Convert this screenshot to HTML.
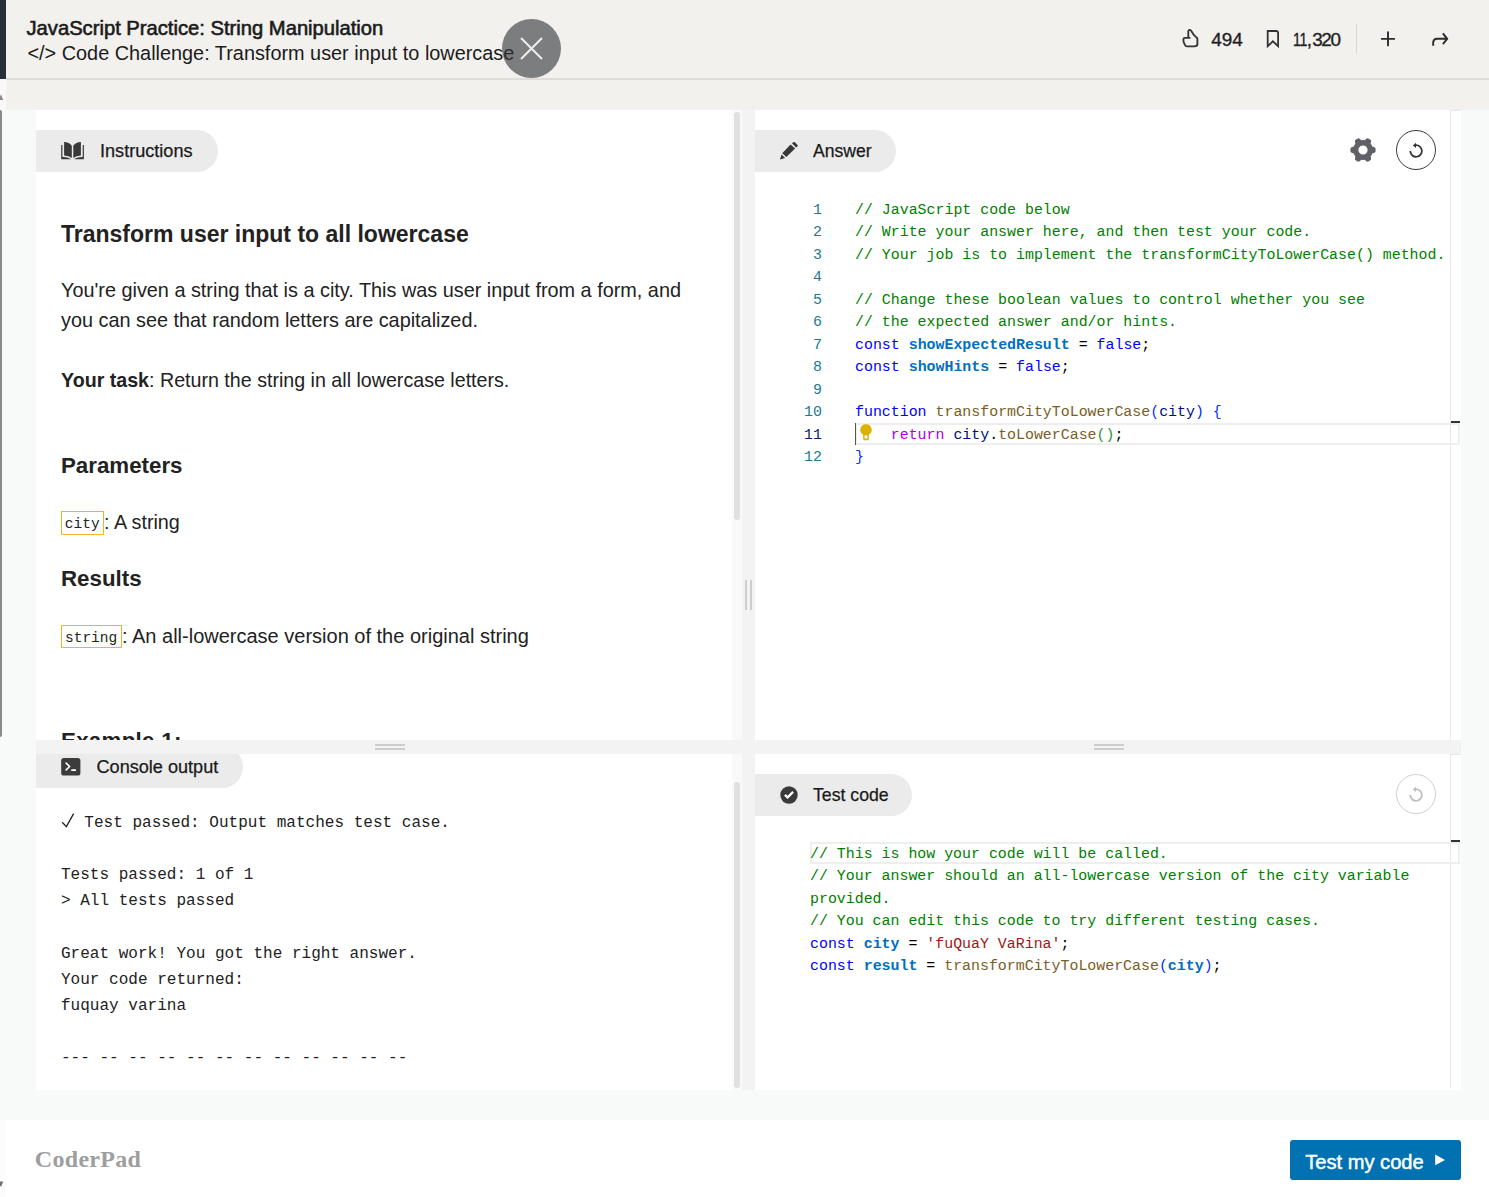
<!DOCTYPE html>
<html><head><meta charset="utf-8">
<style>
*{box-sizing:border-box;margin:0;padding:0}
html,body{width:1489px;height:1197px;overflow:hidden}
body{position:relative;background:#f8f9f9;font-family:"Liberation Sans",sans-serif;color:#1f1f1f}
.a{position:absolute}
.t{position:absolute;white-space:pre;line-height:1}
.mono{font-family:"Liberation Mono",monospace}
.pill{position:absolute;background:#ebebeb;height:42px;border-radius:0 21px 21px 0}
.sb{position:absolute;background:#dfe0e0;border-radius:3px;width:6px}
.hl{position:absolute;background:#cdcdcd;height:2px}
.vl{position:absolute;background:#cdcdcd;width:2px}
.cm{color:#008000}.kw{color:#0000ff}.cn{color:#0070c1;font-weight:bold}.fn{color:#795e26}.pa{color:#001080}.rt{color:#af00db}.b1{color:#0431fa}.b2{color:#319331}.st{color:#a31515}
.ln{position:absolute;color:#237893;text-align:right;width:30px}
</style></head><body>
<!-- left strip -->
<div class="a" style="left:0;top:0;width:6px;height:79px;background:#272e37"></div>
<div class="a" style="left:0;top:79px;width:6px;height:1118px;background:#f9f9f9"></div>
<div class="a" style="left:0;top:110px;width:2px;height:627px;background:#8a8a8a;border-radius:0 2px 2px 0"></div>
<svg class="a" style="left:0;top:93px" width="6" height="8" viewBox="0 0 6 8"><path d="M-2 7L1 1.5L3.2 7Z" fill="#8a8a8a"/></svg>
<!-- header -->
<div class="a" style="left:6px;top:0;width:1483px;height:110px;background:#f2f1ee"></div>
<div class="a" style="left:6px;top:78px;width:1483px;height:2px;background:#dddcd8"></div>
<div class="t" id="h1" style="left:26.5px;top:18.2px;font-size:20.2px;-webkit-text-stroke:0.6px #1b1b1b;color:#1b1b1b">JavaScript Practice: String Manipulation</div>
<div class="t" id="h2" style="left:27.5px;top:44.2px;font-size:19.86px;color:#1b1b1b">&lt;/&gt; Code Challenge: Transform user input to lowercase</div>
<div class="a" style="left:502px;top:19px;width:59px;height:59px;border-radius:50%;background:rgba(52,53,57,0.62)"></div>
<svg class="a" style="left:519px;top:36px" width="25" height="25" viewBox="0 0 25 25"><path d="M2 2L23 23M23 2L2 23" stroke="#eee" stroke-width="2"/></svg>

<!-- right header icons -->
<svg class="a" style="left:1178px;top:26px" width="24" height="24" viewBox="0 0 24 24"><path d="M10.3 11.2V5.8Q10.3 3.8 11.8 3.8Q12.8 3.8 13.4 5.1Q15 8.6 18.6 11.6Q19.4 12.2 19.4 13.2V18.4Q19.3 20.2 16.4 20.3H8.8Q7.6 20.2 6.9 18.8L5.7 16.2Q5.3 15.2 5.5 14.2V12.8Q5.6 11.9 6.6 11.9H12.4" fill="none" stroke="#333" stroke-width="1.85" stroke-linejoin="round"/></svg>
<svg class="a" style="left:1262px;top:26px" width="24" height="24" viewBox="0 0 24 24"><path d="M5.7 20.2V5H14Q16.1 5 16.1 7.1V20.2L10.9 15.3Z" fill="none" stroke="#333" stroke-width="1.8"/></svg>
<svg class="a" style="left:1376px;top:26px" width="24" height="24" viewBox="0 0 24 24"><path d="M12 6.2V19.4M5.8 12.9H18.2" fill="none" stroke="#2b2b2b" stroke-width="1.9" stroke-linecap="round"/></svg>
<svg class="a" style="left:1428px;top:26px" width="24" height="24" viewBox="0 0 24 24"><path d="M14.9 7.4L19.2 12.8L14.9 18.2M18.8 12.8H9.2Q5.3 12.9 5.1 17Q5.1 18.5 5.4 19.8" fill="none" stroke="#2b2b2b" stroke-width="1.9"/></svg>
<div class="t" id="cnt1" style="left:1211.3px;top:31px;font-size:18.9px;-webkit-text-stroke:0.35px #222;color:#222">494</div>
<div class="t" id="cnt2a" style="left:1292.6px;top:30.8px;font-size:18.9px;letter-spacing:-0.3px;transform:scaleX(0.75);transform-origin:0 0;-webkit-text-stroke:0.35px #222;color:#222">11</div>
<div class="t" id="cnt2b" style="left:1306.8px;top:30.8px;font-size:18.9px;-webkit-text-stroke:0.35px #222;color:#222">,</div>
<div class="t" id="cnt2c" style="left:1312.2px;top:30.8px;font-size:18.9px;letter-spacing:-1.4px;-webkit-text-stroke:0.35px #222;color:#222">320</div>
<div class="a" style="left:1356px;top:24px;width:1px;height:30px;background:#d8d7d3"></div>

<!-- panels -->
<div class="a" style="left:36px;top:110px;width:696px;height:630px;background:#fff"></div>
<div class="a" style="left:732px;top:110px;width:10px;height:980px;background:#f8f9f9"></div>
<div class="sb" style="left:734px;top:112px;height:408px"></div>
<div class="a" style="left:742px;top:110px;width:13px;height:980px;background:#f3f3f3"></div>
<div class="vl" style="left:745px;top:580px;height:30px"></div>
<div class="vl" style="left:750px;top:580px;height:30px"></div>
<div class="a" style="left:755px;top:110px;width:706px;height:630px;background:#fff"></div>
<div class="a" style="left:36px;top:740px;width:706px;height:14px;background:#f3f3f3"></div>
<div class="a" style="left:755px;top:740px;width:706px;height:14px;background:#f3f3f3"></div>
<div class="hl" style="left:375px;top:744px;width:30px"></div>
<div class="hl" style="left:375px;top:748px;width:30px"></div>
<div class="hl" style="left:1094px;top:744px;width:30px"></div>
<div class="hl" style="left:1094px;top:748px;width:30px"></div>
<div class="a" style="left:36px;top:754px;width:696px;height:336px;background:#fff"></div>
<div class="sb" style="left:734px;top:782px;height:306px"></div>
<div class="a" style="left:755px;top:754px;width:706px;height:336px;background:#fff"></div>
<div class="a" style="left:1450px;top:110px;width:1px;height:630px;background:#e8e8e8"></div>
<div class="a" style="left:1450px;top:754px;width:1px;height:334px;background:#e8e8e8"></div>


<!-- INSTRUCTIONS -->
<div class="pill" style="left:36px;top:130px;width:182px"></div>
<svg class="a" style="left:61px;top:141px" width="24" height="20" viewBox="0 0 24 20"><path fill="#3a3a3a" d="M3.1 1.1Q8 1.2 10.8 4.75V17.1Q8 14.8 3.1 14.4Z M12.3 4.75Q15 1.2 19.9 1.1V14.4Q15 14.8 12.3 17.1Z M0.2 3.9H1.4V15.2Q1.5 16 2.4 16.1Q7 16.4 9.8 17.9L9.6 18.3Q5 18.1 0.2 18.2Z M22.9 3.9H21.7V15.2Q21.6 16 20.7 16.1Q16.1 16.4 13.3 17.9L13.5 18.3Q18.1 18.1 22.9 18.2Z"/></svg>
<div class="t" id="lbl1" style="left:100px;top:142.2px;font-size:18.1px;-webkit-text-stroke:0.25px #1a1a1a;color:#1a1a1a">Instructions</div>

<div class="a" id="instr" style="left:36px;top:110px;width:696px;height:630px;overflow:hidden">
<div class="t" id="ih" style="left:25px;top:112.6px;font-size:23px;font-weight:bold;color:#222">Transform user input to all lowercase</div>
<div class="t" id="ip1" style="left:25px;top:170.6px;font-size:19.85px;color:#222">You're given a string that is a city. This was user input from a form, and</div>
<div class="t" id="ip2" style="left:25px;top:200.6px;font-size:19.85px;color:#222">you can see that random letters are capitalized.</div>
<div class="t" id="ip3" style="left:25px;top:260.6px;font-size:19.65px;color:#222"><b>Your task</b>: Return the string in all lowercase letters.</div>
<div class="t" id="ih2" style="left:25px;top:345px;font-size:22.3px;font-weight:bold;color:#222">Parameters</div>
<div class="a" style="left:25px;top:401px;width:43px;height:24px;border:1px solid #f0b429"></div>
<div class="t mono" style="left:28.8px;top:406.5px;font-size:14.5px;color:#222">city</div>
<div class="t" id="ip4" style="left:68px;top:402.8px;font-size:19.8px;color:#222">: A string</div>
<div class="t" id="ih3" style="left:25px;top:458px;font-size:22.3px;font-weight:bold;color:#222">Results</div>
<div class="a" style="left:25px;top:515px;width:61px;height:23px;border:1px solid #f0b429"></div>
<div class="t mono" style="left:29px;top:520.6px;font-size:14.5px;color:#222">string</div>
<div class="t" id="ip5" style="left:86px;top:516.3px;font-size:20px;color:#222">: An all-lowercase version of the original string</div>
<div class="t" id="ih4" style="left:25px;top:620.2px;font-size:22.3px;letter-spacing:0.3px;font-weight:bold;color:#222">Example 1:</div>
</div>


<!-- ANSWER PANEL -->
<div class="pill" style="left:755px;top:130px;width:141px"></div>
<svg class="a" style="left:779px;top:141px" width="20" height="20" viewBox="0 0 20 20"><path fill="#383838" d="M13 2.3L14.2 1.2Q15 0.6 15.8 1.3L18.4 3.8Q19 4.6 18.4 5.4L17 6.4Z M11.6 3.4L16.1 7.4L7.4 16.1L3.2 12.3Z M2.5 13.4L6.1 16.9L1 18.4Z"/></svg>
<div class="t" id="lbl2" style="left:813px;top:143.2px;font-size:17.6px;-webkit-text-stroke:0.25px #1a1a1a;color:#1a1a1a">Answer</div>
<svg class="a" style="left:1348.5px;top:136.2px" width="28" height="28" viewBox="0 0 28 28"><path fill="#5f6166" fill-rule="evenodd" d="M26.60 14.00 L26.58 14.66 L26.53 15.32 L26.44 15.97 L25.74 16.50 L24.87 16.91 L23.99 17.24 L23.24 17.55 L23.04 18.03 L22.82 18.49 L22.57 18.95 L22.30 19.39 L22.01 19.82 L21.69 20.23 L21.80 21.03 L21.95 21.95 L22.03 22.92 L21.93 23.79 L21.41 24.19 L20.86 24.57 L20.30 24.91 L19.72 25.23 L19.12 25.51 L18.52 25.76 L17.71 25.41 L16.91 24.87 L16.18 24.27 L15.55 23.78 L15.03 23.85 L14.52 23.89 L14.00 23.90 L13.48 23.89 L12.97 23.85 L12.45 23.78 L11.82 24.27 L11.09 24.87 L10.29 25.41 L9.48 25.76 L8.88 25.51 L8.28 25.23 L7.70 24.91 L7.14 24.57 L6.59 24.19 L6.07 23.79 L5.97 22.92 L6.05 21.95 L6.20 21.03 L6.31 20.23 L5.99 19.82 L5.70 19.39 L5.43 18.95 L5.18 18.49 L4.96 18.03 L4.76 17.55 L4.01 17.24 L3.13 16.91 L2.26 16.50 L1.56 15.97 L1.47 15.32 L1.42 14.66 L1.40 14.00 L1.42 13.34 L1.47 12.68 L1.56 12.03 L2.26 11.50 L3.13 11.09 L4.01 10.76 L4.76 10.45 L4.96 9.97 L5.18 9.51 L5.43 9.05 L5.70 8.61 L5.99 8.18 L6.31 7.77 L6.20 6.97 L6.05 6.05 L5.97 5.08 L6.07 4.21 L6.59 3.81 L7.14 3.43 L7.70 3.09 L8.28 2.77 L8.88 2.49 L9.48 2.24 L10.29 2.59 L11.09 3.13 L11.82 3.73 L12.45 4.22 L12.97 4.15 L13.48 4.11 L14.00 4.10 L14.52 4.11 L15.03 4.15 L15.55 4.22 L16.18 3.73 L16.91 3.13 L17.71 2.59 L18.52 2.24 L19.12 2.49 L19.72 2.77 L20.30 3.09 L20.86 3.43 L21.41 3.81 L21.93 4.21 L22.03 5.08 L21.95 6.05 L21.80 6.97 L21.69 7.77 L22.01 8.18 L22.30 8.61 L22.57 9.05 L22.82 9.51 L23.04 9.97 L23.24 10.45 L23.99 10.76 L24.87 11.09 L25.74 11.50 L26.44 12.03 L26.53 12.68 L26.58 13.34Z M14 9.4A4.6 4.6 0 1 0 14 18.6A4.6 4.6 0 1 0 14 9.4Z"/></svg>
<div class="a" style="left:1396px;top:130px;width:40px;height:40px;border-radius:50%;border:1.3px solid #3a3a3a"></div>
<svg class="a" style="left:1404px;top:139px" width="24" height="24" viewBox="0 0 24 24"><path d="M11.6 6.2A5.8 5.8 0 1 1 6.3 12.6" fill="none" stroke="#333" stroke-width="1.75" stroke-linecap="round"/><path d="M8.9 6.4L12 3.7L12 9.1Z" fill="#333"/></svg>

<div class="a mono" style="left:782px;top:198.9px;width:40px;font-size:14.92px;line-height:22.5px;color:#237893;text-align:right;white-space:pre">1
2
3
4
5
6
7
8
9
10
<span style="color:#0b216f">11</span>
12</div>
<div class="a" style="left:855px;top:423px;width:605px;height:22px;border:2px solid #eeeeee;border-right-width:2px"></div>
<div class="a" style="left:855px;top:423px;width:1.4px;height:22px;background:#555"></div>
<svg class="a" style="left:859px;top:423px" width="14" height="18" viewBox="0 0 14 18"><path d="M7 1.2A5.6 5.6 0 0 0 3.6 11.3L4.2 12.2V16.4Q4.2 17.2 5 17.2H9Q9.8 17.2 9.8 16.4V12.2L10.4 11.3A5.6 5.6 0 0 0 7 1.2Z" fill="#ddb100"/><rect x="5.6" y="12.4" width="2.8" height="3.2" fill="#fff"/></svg>
<div class="a mono" id="code1" style="left:855px;top:198.9px;font-size:14.92px;line-height:22.5px;color:#000;white-space:pre"><span class="cm">// JavaScript code below</span>
<span class="cm">// Write your answer here, and then test your code.</span>
<span class="cm">// Your job is to implement the transformCityToLowerCase() method.</span>

<span class="cm">// Change these boolean values to control whether you see</span>
<span class="cm">// the expected answer and/or hints.</span>
<span class="kw">const</span> <span class="cn">showExpectedResult</span> = <span class="kw">false</span>;
<span class="kw">const</span> <span class="cn">showHints</span> = <span class="kw">false</span>;

<span class="kw">function</span> <span class="fn">transformCityToLowerCase</span><span class="b1">(</span><span class="pa">city</span><span class="b1">)</span> <span class="b1">{</span>
    <span class="rt">return</span> <span class="pa">city</span>.<span class="fn">toLowerCase</span><span class="b2">()</span>;
<span class="b1">}</span></div>
<div class="a" style="left:1451px;top:110px;width:10px;height:1px;background:#e6e6e6"></div>
<div class="a" style="left:1451px;top:421px;width:9px;height:2px;background:#333"></div>

<!-- CONSOLE PANEL -->
<div class="a" style="left:36px;top:754px;width:696px;height:336px;overflow:hidden">
<div class="pill" style="left:0;top:-8px;width:207px"></div>
<svg class="a" style="left:25px;top:4px" width="20" height="18" viewBox="0 0 20 18"><rect x="0.2" y="0" width="19.2" height="17.6" rx="2.6" fill="#3c3c3c"/><path d="M5.2 5.2L8.6 8.5L5.2 11.8" fill="none" stroke="#fff" stroke-width="1.7" stroke-linecap="round" stroke-linejoin="round"/><rect x="10.2" y="11.3" width="4.8" height="1.6" rx="0.5" fill="#fff"/></svg>
<div class="t" id="lbl3" style="left:60.5px;top:4px;font-size:18.1px;-webkit-text-stroke:0.25px #1a1a1a;color:#1a1a1a">Console output</div>
<svg class="a" style="left:25px;top:58px" width="16" height="16" viewBox="0 0 16 16"><path d="M1.2 10.2L5.4 14.6L12.6 1.6" fill="none" stroke="#222" stroke-width="1.3"/></svg>
<div class="a mono" id="cons" style="left:25px;top:55.6px;font-size:16.04px;line-height:26.2px;color:#222;white-space:pre"><span style="display:inline-block;width:23.3px"></span>Test passed: Output matches test case.

Tests passed: 1 of 1
&gt; All tests passed

Great work! You got the right answer.
Your code returned:
fuquay varina

--- -- -- -- -- -- -- -- -- -- -- --</div>
</div>

<!-- TEST CODE PANEL -->
<div class="pill" style="left:755px;top:774px;width:157px"></div>
<svg class="a" style="left:779px;top:785px" width="20" height="20" viewBox="0 0 20 20"><circle cx="10" cy="10" r="8.7" fill="#3a3a3a"/><path d="M5.9 9.9L8.6 12.4L14.1 6.9" fill="none" stroke="#fff" stroke-width="2.2"/></svg>
<div class="t" id="lbl4" style="left:813px;top:786.5px;font-size:17.7px;-webkit-text-stroke:0.25px #1a1a1a;color:#1a1a1a">Test code</div>
<div class="a" style="left:1396px;top:774px;width:40px;height:40px;border-radius:50%;border:1.3px solid #cfcfcf"></div>
<svg class="a" style="left:1404px;top:783px" width="24" height="24" viewBox="0 0 24 24"><path d="M11.6 6.2A5.8 5.8 0 1 1 6.3 12.6" fill="none" stroke="#bdbdbd" stroke-width="1.75" stroke-linecap="round"/><path d="M8.9 6.4L12 3.7L12 9.1Z" fill="#bdbdbd"/></svg>
<div class="a" style="left:810px;top:842px;width:650px;height:22px;border:2px solid #eeeeee"></div>
<div class="a mono" id="code2" style="left:810px;top:842.8px;font-size:14.92px;line-height:22.45px;color:#000;white-space:pre"><span class="cm">// This is how your code will be called.</span>
<span class="cm">// Your answer should an all-lowercase version of the city variable</span>
<span class="cm">provided.</span>
<span class="cm">// You can edit this code to try different testing cases.</span>
<span class="kw">const</span> <span class="cn">city</span> = <span class="st">'fuQuaY VaRina'</span>;
<span class="kw">const</span> <span class="cn">result</span> = <span class="fn">transformCityToLowerCase</span><span class="b1">(</span><span class="cn">city</span><span class="b1">)</span>;</div>
<div class="a" style="left:1451px;top:754px;width:10px;height:1px;background:#e6e6e6"></div>
<div class="a" style="left:1451px;top:840px;width:9px;height:2px;background:#333"></div>

<!-- footer -->
<div class="a" style="left:6px;top:1120px;width:1483px;height:77px;background:#fff"></div>
<div class="a" style="left:0;top:1120px;width:6px;height:77px;background:#fcfcfc"></div>
<div class="t" id="logo" style="left:34.8px;top:1147.4px;font-family:'Liberation Serif',serif;font-weight:bold;font-size:24px;letter-spacing:0.3px;color:#9d9e9f">CoderPad</div>
<div class="a" style="left:1290px;top:1140px;width:171px;height:40px;background:#0071b1;border-radius:3px"></div>
<svg class="a" style="left:1434px;top:1154px" width="12" height="12" viewBox="0 0 12 12"><path d="M1.2 0.6L11 5.9L1.2 11.2Z" fill="#fff"/></svg>
<div class="t" id="btn" style="left:1305.3px;top:1152.3px;font-size:20.1px;-webkit-text-stroke:0.45px #fff;color:#fff">Test my code</div>
<svg class="a" style="left:0;top:1180px" width="6" height="8" viewBox="0 0 6 8"><path d="M-2 1.5L3.2 1.5L1 7Z" fill="#707070"/></svg>
</body></html>
